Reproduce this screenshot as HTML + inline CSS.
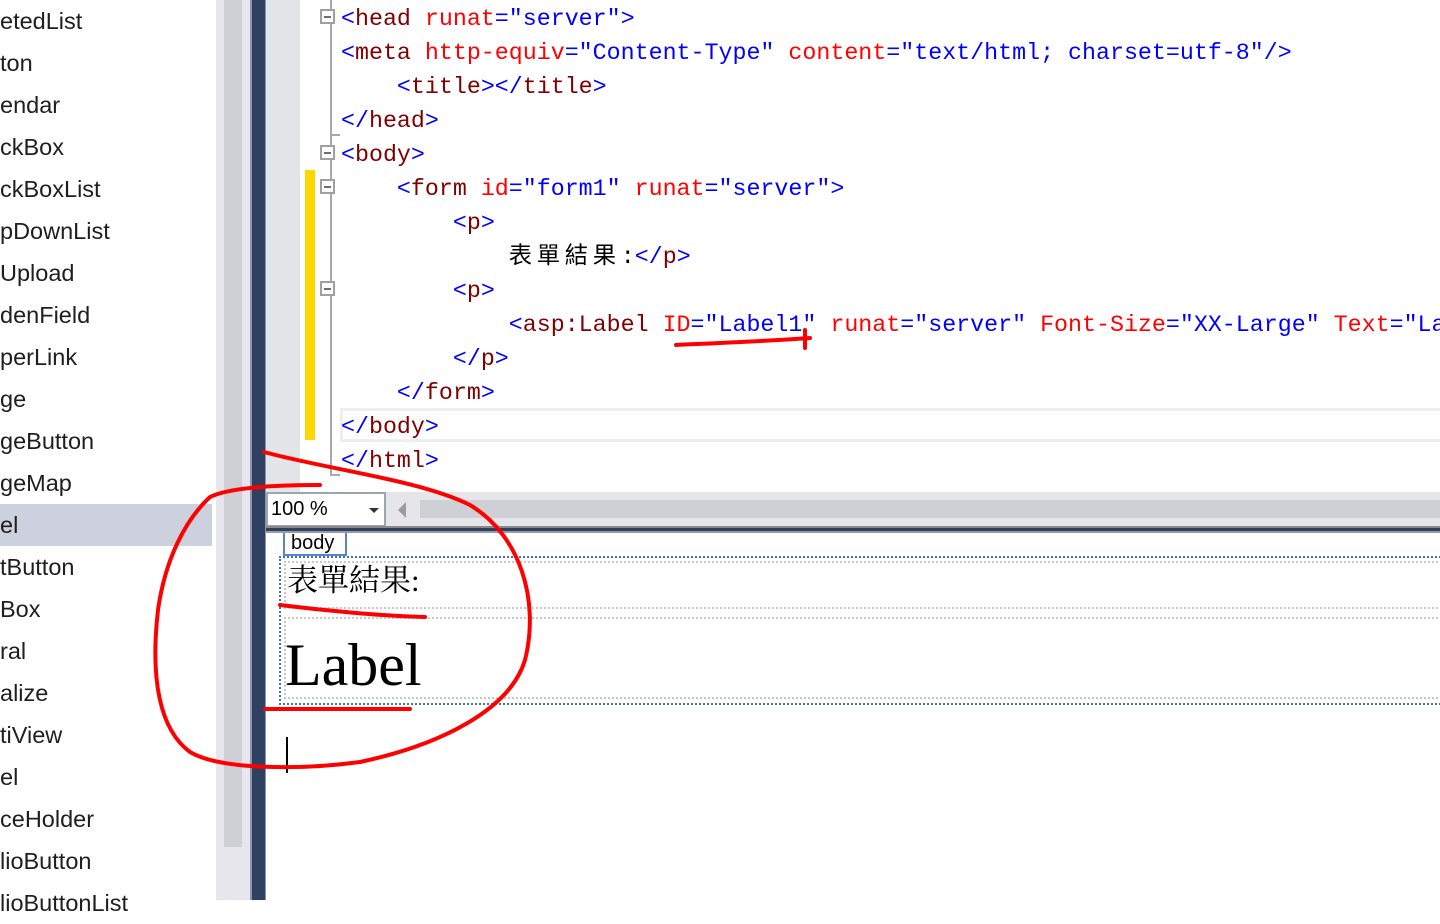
<!DOCTYPE html>
<html><head><meta charset="utf-8">
<style>
*{margin:0;padding:0;box-sizing:border-box}
body{width:1440px;height:900px;overflow:hidden;background:#fff;position:relative;font-family:"Liberation Sans","Noto Sans CJK TC",sans-serif}
.tb{position:absolute;left:0;top:0;width:216px;height:900px;background:#fff}
.tb div{position:absolute;left:0;height:42px;line-height:42px;font-size:23.5px;color:#1e1e1e;white-space:nowrap;width:212px}
.abs{position:absolute}
.code{position:absolute;left:341px;top:2px;width:1099px;height:490px;overflow:hidden;font-family:"Liberation Mono","Noto Sans CJK TC",monospace;font-size:23.3px}
.code div{height:34px;line-height:34px;white-space:pre}
.b{color:#0000ff}.m{color:#800000}.r{color:#ff0000}.k{color:#000}
.cj{display:inline-block;width:28px;text-align:left}
.fold{position:absolute;left:320px;width:15px;height:15px;border:2px solid #a0a0a0;background:#fff}
.fold:after{content:"";position:absolute;left:2px;top:5px;width:7px;height:2px;background:#6e6e6e}
</style></head><body>
<div class="tb">
<div style="top:0">etedList</div>
<div style="top:42px">ton</div>
<div style="top:84px">endar</div>
<div style="top:126px">ckBox</div>
<div style="top:168px">ckBoxList</div>
<div style="top:210px">pDownList</div>
<div style="top:252px">Upload</div>
<div style="top:294px">denField</div>
<div style="top:336px">perLink</div>
<div style="top:378px">ge</div>
<div style="top:420px">geButton</div>
<div style="top:462px">geMap</div>
<div style="top:504px;background:#cdd0dd">el</div>
<div style="top:546px">tButton</div>
<div style="top:588px">Box</div>
<div style="top:630px">ral</div>
<div style="top:672px">alize</div>
<div style="top:714px">tiView</div>
<div style="top:756px">el</div>
<div style="top:798px">ceHolder</div>
<div style="top:840px">lioButton</div>
<div style="top:882px">lioButtonList</div>
</div>
<div class="abs" style="left:216px;top:0;width:34px;height:900px;background:#e6e6ec"></div>
<div class="abs" style="left:224px;top:0;width:18px;height:847px;background:#cfd0d6"></div>
<div class="abs" style="left:250px;top:0;width:2px;height:900px;background:#8a96b4"></div>
<div class="abs" style="left:252px;top:0;width:13px;height:900px;background:#2f4060"></div>
<div class="abs" style="left:265px;top:0;width:1px;height:900px;background:#8a96b4"></div>
<div class="abs" style="left:266px;top:0;width:34px;height:492px;background:#e4e5e8"></div>
<div class="abs" style="left:300px;top:0;width:1140px;height:492px;background:#fff"></div>
<div class="abs" style="left:305px;top:170px;width:10px;height:270px;background:#ffd700"></div>
<div class="abs" style="left:330px;top:0;width:2px;height:476px;background:#a8a8a8"></div>
<div class="abs" style="left:330px;top:474px;width:10px;height:2px;background:#a8a8a8"></div>
<div class="abs" style="left:330px;top:134px;width:10px;height:2px;background:#a8a8a8"></div>
<div class="fold" style="top:9px"></div>
<div class="fold" style="top:145px"></div>
<div class="fold" style="top:179px"></div>
<div class="fold" style="top:281px"></div>
<div class="abs" style="left:340px;top:408px;width:1100px;height:34px;border:3px solid #eee;border-right:none"></div>
<div class="code"><div><span class="b">&lt;</span><span class="m">head</span> <span class="r">runat</span><span class="b">="server"&gt;</span></div><div><span class="b">&lt;</span><span class="m">meta</span> <span class="r">http-equiv</span><span class="b">="Content-Type"</span> <span class="r">content</span><span class="b">="text/html; charset=utf-8"/&gt;</span></div><div>    <span class="b">&lt;</span><span class="m">title</span><span class="b">&gt;&lt;/</span><span class="m">title</span><span class="b">&gt;</span></div><div><span class="b">&lt;/</span><span class="m">head</span><span class="b">&gt;</span></div><div><span class="b">&lt;</span><span class="m">body</span><span class="b">&gt;</span></div><div>    <span class="b">&lt;</span><span class="m">form</span> <span class="r">id</span><span class="b">="form1"</span> <span class="r">runat</span><span class="b">="server"&gt;</span></div><div>        <span class="b">&lt;</span><span class="m">p</span><span class="b">&gt;</span></div><div>            <span class="k"><span class="cj">表</span><span class="cj">單</span><span class="cj">結</span><span class="cj">果</span>:</span><span class="b">&lt;/</span><span class="m">p</span><span class="b">&gt;</span></div><div>        <span class="b">&lt;</span><span class="m">p</span><span class="b">&gt;</span></div><div>            <span class="b">&lt;</span><span class="m">asp:Label</span> <span class="r">ID</span><span class="b">="Label1"</span> <span class="r">runat</span><span class="b">="server"</span> <span class="r">Font-Size</span><span class="b">="XX-Large"</span> <span class="r">Text</span><span class="b">="Label"</span></div><div>        <span class="b">&lt;/</span><span class="m">p</span><span class="b">&gt;</span></div><div>    <span class="b">&lt;/</span><span class="m">form</span><span class="b">&gt;</span></div><div><span class="b">&lt;/</span><span class="m">body</span><span class="b">&gt;</span></div><div><span class="b">&lt;/</span><span class="m">html</span><span class="b">&gt;</span></div></div>
<!-- zoom bar -->
<div class="abs" style="left:266px;top:492px;width:1174px;height:35px;background:#e6e6ea"></div>
<div class="abs" style="left:420px;top:500px;width:1020px;height:18px;background:#cfd0d5"></div>
<div class="abs" style="left:266px;top:492px;width:120px;height:35px;background:#fff;border:2px solid #a0a4b0;font-size:20px;line-height:31px;padding-left:3px;color:#000">100 %</div>
<div class="abs" style="left:369px;top:508px;width:0;height:0;border-left:5px solid transparent;border-right:5px solid transparent;border-top:5px solid #333"></div>
<div class="abs" style="left:398px;top:502px;width:0;height:0;border-top:8px solid transparent;border-bottom:8px solid transparent;border-right:8px solid #9a9ca4"></div>
<div class="abs" style="left:266px;top:526px;width:1174px;height:7px;background:#2f4060;border-top:2px solid #8a8a8a;border-bottom:2px solid #9a9a9a"></div>
<!-- design -->
<div class="abs" style="left:283px;top:533px;width:64px;height:23px;border:2px solid #5a86c8;border-top:none;font-size:20px;line-height:20px;padding-left:6px;color:#000">body</div>
<div class="abs" style="left:279px;top:556px;width:1170px;height:149px;border:2px dotted #3b72c8;border-right:none"></div>
<div class="abs" style="left:284px;top:561px;width:1170px;height:48px;border:2px dotted #c8c8c8;border-right:none"></div>
<div class="abs" style="left:284px;top:617px;width:1170px;height:82px;border:2px dotted #c8c8c8;border-right:none"></div>
<div class="abs" style="left:287px;top:561px;font-size:31px;line-height:40px;font-family:'Liberation Serif','Noto Serif CJK SC',serif;color:#000">表單結果:</div>
<div class="abs" style="left:285px;top:630px;font-size:60px;line-height:70px;font-family:'Liberation Serif',serif;color:#000">Label</div>
<div class="abs" style="left:286px;top:737px;width:2px;height:36px;background:#000"></div>
<svg class="abs" style="left:0;top:0" width="1440" height="900">
<g fill="none" stroke="#ff0000" stroke-width="4" stroke-linecap="round" stroke-linejoin="round">
<path d="M264 452 C330 470 420 480 470 505 C520 535 540 600 525 660 C510 710 440 745 360 762 C300 770 220 770 190 752 C160 730 150 680 158 610 C165 560 185 520 210 497 C230 487 280 485 320 485"/>
<path d="M676 345 C720 343 770 341 810 338"/>
<path d="M805 330 L805 348"/>
<path d="M280 605 C320 610 380 616 425 617"/>
<path d="M265 709 L410 709"/>
</g>
</svg>
</body></html>
